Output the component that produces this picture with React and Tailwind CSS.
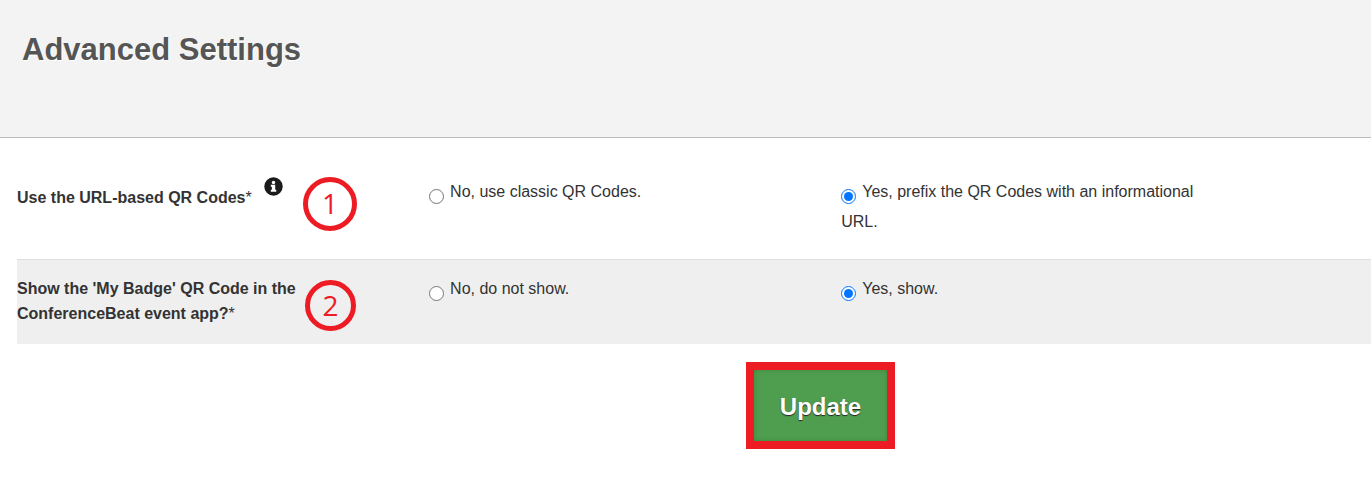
import { useState } from "react";

const settings = [
  {
    name: "urlQrCodes",
    label: "Use the URL-based QR Codes",
    info: true,
    no: "No, use classic QR Codes.",
    yes: "Yes, prefix the QR Codes with an informational URL.",
  },
  {
    name: "showBadge",
    label: "Show the 'My Badge' QR Code in the ConferenceBeat event app?",
    no: "No, do not show.",
    yes: "Yes, show.",
  },
];

function InfoIcon() {
  return (
    <svg
      viewBox="0 0 512 512"
      className="ml-3 inline-block size-[19px] -translate-y-3 align-middle"
      role="img"
      aria-label="More information"
    >
      <circle cx="256" cy="256" r="248" fill="#1b1b1b" />
      <circle cx="256" cy="148" r="46" fill="#fff" />
      <path
        d="M184 210h118v136h28v54H184v-54h28v-82h-28z"
        fill="#fff"
      />
    </svg>
  );
}

function StepMarker({ step }) {
  return (
    <span
      className={
        step === 1
          ? "absolute left-[286px] top-[39px] flex size-[54px] items-center justify-center rounded-full border-5 border-[#ed1c24] pb-0.5 font-['Open_Sans',sans-serif] text-[28px] leading-none font-medium text-[#ed1c24]"
          : "absolute left-[288px] top-[20px] flex size-[51px] items-center justify-center rounded-full border-5 border-[#ed1c24] pb-0.5 font-['Open_Sans',sans-serif] text-[28px] leading-none font-medium text-[#ed1c24]"
      }
    >
      {step}
    </span>
  );
}

function RadioOption({ name, value, text, selected, onChange }) {
  const id = `${name}-${value}`;

  return (
    <div className="pr-40 leading-[30px]">
      <input
        type="radio"
        id={id}
        name={name}
        value={value}
        checked={selected === value}
        onChange={() => onChange(name, value)}
        className="mr-1.5 size-[15px] translate-y-[7px] accent-[#0075ff]"
      />
      <label htmlFor={id}>{text}</label>
    </div>
  );
}

export default function App() {
  const [values, setValues] = useState({ urlQrCodes: "yes", showBadge: "yes" });

  const handleChange = (name, value) => {
    setValues((prev) => ({ ...prev, [name]: value }));
  };

  return (
    <div className="min-h-screen bg-white font-['Liberation_Sans',Arial,sans-serif] text-base text-[#333]">
      <header className="border-b border-[#bbb] bg-[#f3f3f3] px-[22px] pt-8 pb-[69px]">
        <h1 className="text-[31px] leading-9 font-bold text-[#555] [text-shadow:1px_1px_0_#fff]">
          Advanced Settings
        </h1>
      </header>

      <form onSubmit={(e) => e.preventDefault()}>
        <div className="pl-[17px]">
          {settings.map((setting, index) => (
            <div
              key={setting.name}
              role="radiogroup"
              aria-labelledby={`${setting.name}-label`}
              className={
                index === 0
                  ? "relative grid grid-cols-[7fr_7fr_9fr] pt-[39px] pb-[22px]"
                  : "relative grid grid-cols-[7fr_7fr_9fr] border-t border-[#ddd] bg-[#efefef] pt-3.5 pb-[18px]"
              }
            >
              <div
                className={
                  index === 0
                    ? "max-w-[290px] pt-2 leading-[25px]"
                    : "max-w-[290px] pt-0.5 leading-[25px]"
                }
              >
                <span id={`${setting.name}-label`} className="font-bold">
                  {setting.label}
                  <span className="font-normal">*</span>
                </span>
                {setting.info && <InfoIcon />}
                <StepMarker step={index + 1} />
              </div>
              <RadioOption
                name={setting.name}
                value="no"
                text={setting.no}
                selected={values[setting.name]}
                onChange={handleChange}
              />
              <RadioOption
                name={setting.name}
                value="yes"
                text={setting.yes}
                selected={values[setting.name]}
                onChange={handleChange}
              />
            </div>
          ))}
        </div>

        <div className="flex justify-center pt-[18px] pl-[270px]">
          <button
            type="submit"
            className="border-8 border-[#ed1c24] bg-[#4f9d4f] px-[26px] pt-[21px] pb-[19px] text-2xl leading-[31px] font-bold text-white shadow-[inset_0_0_4px_#3c863c] [text-shadow:0_1px_1px_#222]"
          >
            Update
          </button>
        </div>
      </form>
    </div>
  );
}
